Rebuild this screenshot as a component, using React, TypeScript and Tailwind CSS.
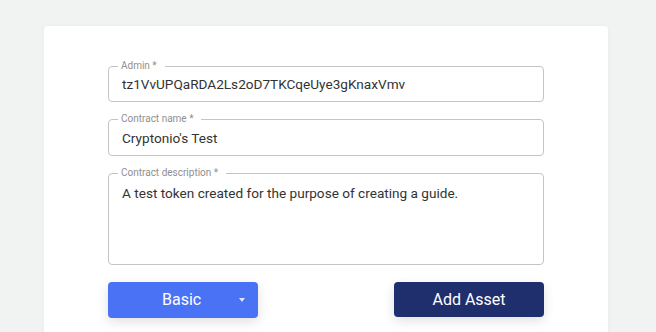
import { ReactNode } from 'react';

function Field({ label, height, top, children }: { label: string; height: string; top?: boolean; children: ReactNode }) {
  return (
    <div className={`relative border border-[#c4c4c4] rounded-[4px] ${height} flex ${top ? 'items-start pt-[10px]' : 'items-center'} px-[13px]`}>
      <span className="absolute -top-[7px] left-[9px] bg-white pl-[3px] pr-[8px] text-[10px] leading-[12px] text-[#8f8f8f]">{label}</span>
      <span className="text-[13.6px] leading-[18px] text-[#333]">{children}</span>
    </div>
  );
}

export default function App() {
  return (
    <div className="h-[332px] overflow-hidden bg-[#f1f2f2] pt-[26px] font-['Roboto',sans-serif]">
      <div className="ml-[44px] w-[564px] h-[330px] bg-white rounded-[4px] shadow-[0_0_4px_rgba(0,0,0,0.04)] pt-[40px] px-[64px]">
        <div className="flex flex-col gap-[17px]">
          <Field label="Admin *" height="h-[36px]">tz1VvUPQaRDA2Ls2oD7TKCqeUye3gKnaxVmv</Field>
          <Field label="Contract name *" height="h-[37px]">Cryptonio's Test</Field>
          <Field label="Contract description *" height="h-[92px]" top>A test token created for the purpose of creating a guide.</Field>
        </div>
        <div className="flex justify-between mt-[17px]">
          <div className="w-[150px] h-[36px] rounded-[4px] bg-[#4a72f5] text-white flex items-center shadow-[0_4px_12px_rgba(0,0,0,0.12)]">
            <span className="flex-1 pl-[54px] text-[16px]">Basic</span>
            <span className="w-[32px] flex justify-center">
              <svg width="6" height="4" viewBox="0 0 6 4"><path d="M0 0h6L3 4z" fill="#dfe6ff" /></svg>
            </span>
          </div>
          <div className="w-[150px] h-[35px] rounded-[4px] bg-[#1f2f6e] text-white flex items-center justify-center text-[16px] shadow-[0_4px_12px_rgba(0,0,0,0.12)]">
            Add Asset
          </div>
        </div>
      </div>
    </div>
  );
}
